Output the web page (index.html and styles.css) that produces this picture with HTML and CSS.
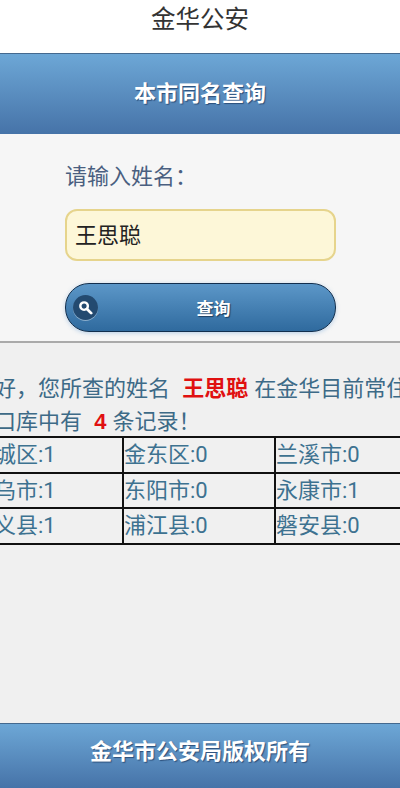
FILE: index.html
```html
<!DOCTYPE html>
<html lang="zh-CN">
<head>
    <meta charset="UTF-8">
    <meta name="viewport" content="width=device-width, initial-scale=1.0">
    <title>金华公安</title>
    <link rel="stylesheet" href="styles.css">
</head>
<body>
    <div class="page">
        <div class="top-title">金华公安</div>
        <div class="bar header-bar">本市同名查询</div>

        <form class="search-form">
            <label class="name-label" for="name">请输入姓名：</label>
            <input class="name-input" type="text" id="name" value="王思聪">
            <button class="search-btn" type="button">
                <span class="search-icon">
                    <svg width="15" height="15" viewBox="0 0 16 16">
                        <circle cx="6.5" cy="6.5" r="4" fill="none" stroke="#fff" stroke-width="2.6"/>
                        <path d="M9.6 9.6L14 14" stroke="#fff" stroke-width="3" stroke-linecap="round"/>
                    </svg>
                </span>
                查询
            </button>
        </form>

        <div class="result">
            <p class="result-text">你好，您所查的姓名&nbsp;&nbsp;<b class="hit">王思聪</b> 在金华目前常住人口库中有&nbsp;&nbsp;<b class="hit">4</b> 条记录！</p>
            <table class="area-table">
                <tr><td>婺城区:1</td><td>金东区:0</td><td>兰溪市:0</td></tr>
                <tr><td>义乌市:1</td><td>东阳市:0</td><td>永康市:1</td></tr>
                <tr><td>武义县:1</td><td>浦江县:0</td><td>磐安县:0</td></tr>
            </table>
        </div>

        <div class="bar footer-bar">金华市公安局版权所有</div>
    </div>
</body>
</html>
```

FILE: styles.css
```css
/* Basic styling for the body */
body {
    font-family: Roboto, "Noto Sans CJK SC", sans-serif;
    background-color: #f0f0f0;
    margin: 0;
    padding: 0;
}

.page {
    width: 400px;
    height: 788px;
    overflow: hidden;
    display: flex;
    flex-direction: column;
}

/* Top white title */
.top-title {
    height: 53px;
    padding-top: 2px;
    box-sizing: border-box;
    background-color: #fff;
    color: #333;
    font-size: 24.5px;
    line-height: 36px;
    text-align: center;
}

/* Blue header and footer bars */
.bar {
    color: #fff;
    font-weight: bold;
    font-size: 22px;
    text-align: center;
    text-shadow: 1px 1px 1px #2c4f7a;
    background: linear-gradient(#6da7d6, #4673a8);
    border-top: 1px solid #44698f;
    box-sizing: border-box;
}

.header-bar {
    height: 81px;
    line-height: 79px;
}

.footer-bar {
    height: 65px;
    line-height: 56px;
    margin-top: auto;
}

/* Search form */
.search-form {
    height: 209px;
    box-sizing: border-box;
    padding: 27px 64px 0 65px;
    background-color: #f6f6f6;
    border-bottom: 2px solid #aaa;
    display: flex;
    flex-direction: column;
}

.name-label {
    color: #4a5f80;
    font-size: 22px;
    line-height: 32px;
    margin-bottom: 16px;
}

.name-input {
    width: 271px;
    height: 52px;
    box-sizing: border-box;
    padding: 0 8px 5px;
    border: 2px solid #e6d48c;
    border-radius: 12px;
    background-color: #fdf7d8;
    color: #222;
    font-family: inherit;
    font-size: 22px;
    margin-bottom: 22px;
}

.search-btn {
    position: relative;
    width: 271px;
    height: 49px;
    box-sizing: border-box;
    padding: 0 0 0 26px;
    border: 1px solid #122f4e;
    border-radius: 24px;
    background: linear-gradient(#5c97c8, #2f6a9e);
    box-shadow: 0 1px 4px rgba(90, 150, 210, 0.4);
    color: #fff;
    font-family: inherit;
    font-weight: bold;
    font-size: 17px;
    text-shadow: 1px 1px 1px #1e3f60;
}

.search-icon {
    position: absolute;
    left: 7px;
    top: 11px;
    width: 25px;
    height: 25px;
    border-radius: 50%;
    background-color: #234a70;
    box-shadow: 0 1px 0 rgba(255, 255, 255, 0.4);
    display: flex;
    align-items: center;
    justify-content: center;
}

/* Result area runs wider than the window, so it is clipped on both sides */
.result {
    width: 458px;
    margin-left: -30px;
    padding-top: 29px;
}

.result-text {
    margin: 0 0 -2px 2px;
    color: #3d6a87;
    font-family: "Liberation Sans", "Noto Sans CJK SC", sans-serif;
    font-size: 22px;
    line-height: 33px;
}

.hit {
    color: #e01010;
}

.area-table {
    width: 458px;
    table-layout: fixed;
    border-collapse: collapse;
    color: #3d7290;
    font-size: 22px;
    line-height: 28px;
}

.area-table td {
    height: 35.7px;
    padding: 0;
    border: 2px solid #111;
    box-sizing: border-box;
}
```
